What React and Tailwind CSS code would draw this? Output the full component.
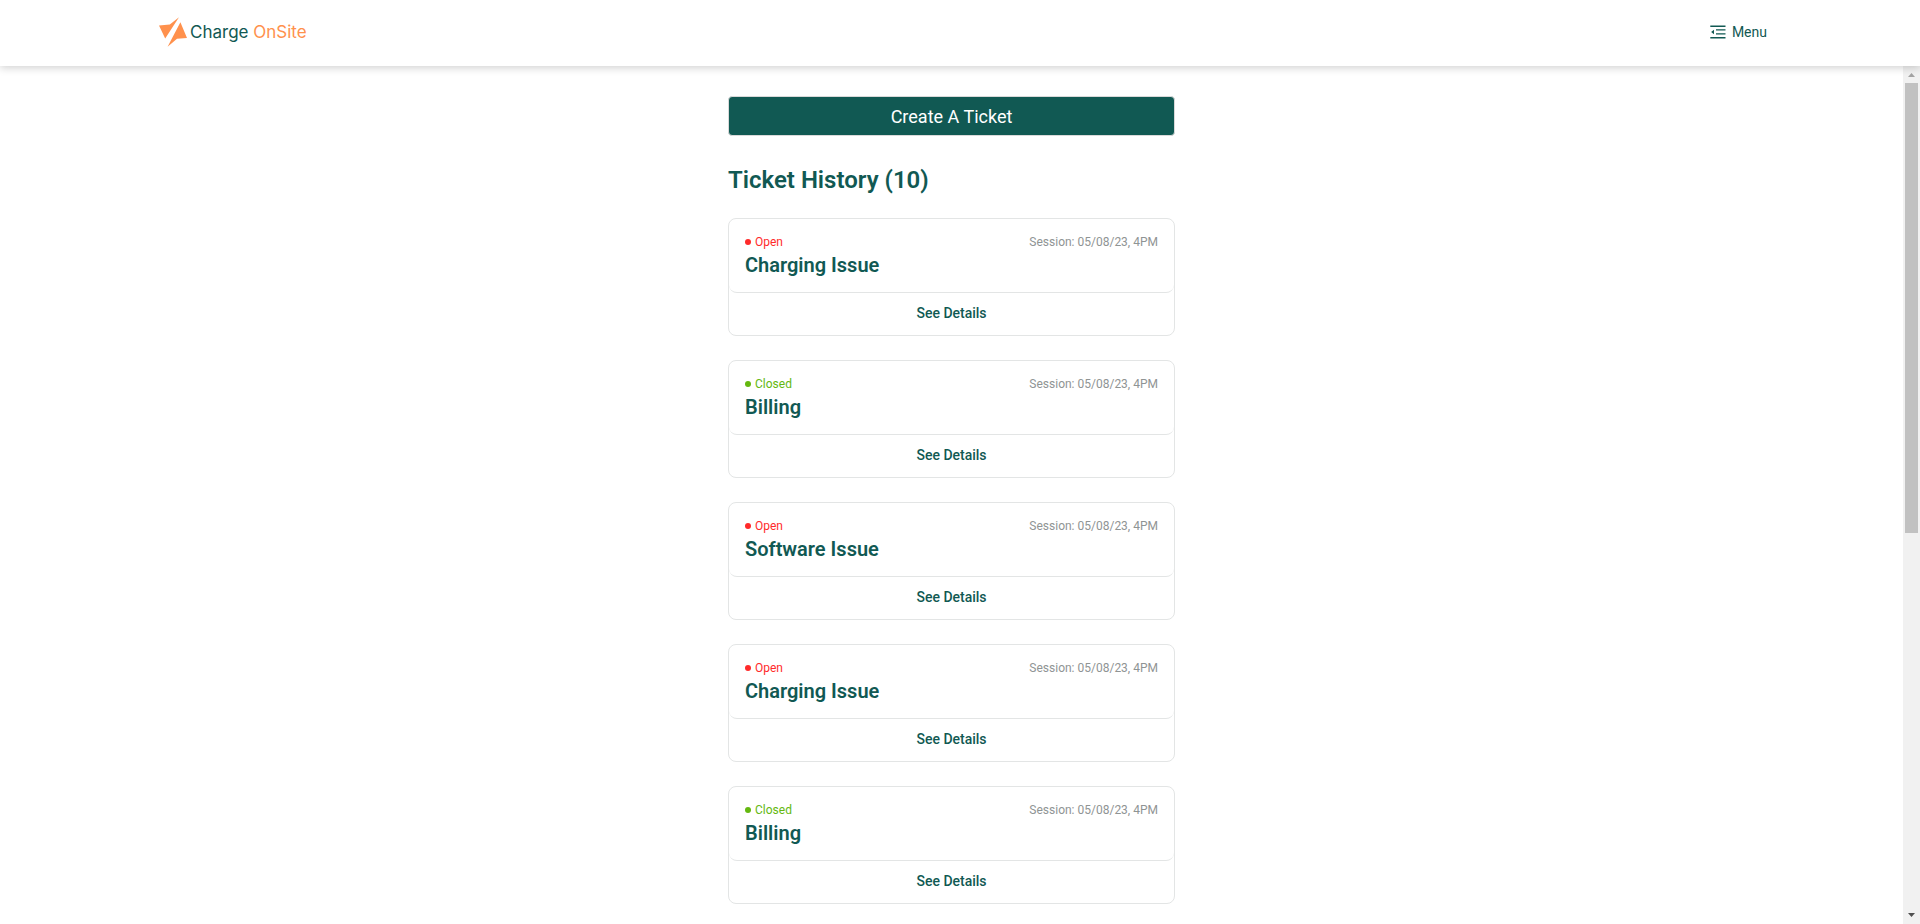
import { useEffect, useRef, useState } from "react";

const kinds = [
  ["Charging Issue", "Open"],
  ["Billing", "Closed"],
  ["Software Issue", "Open"],
];
const order = [0, 1, 2, 0, 1, 2, 0, 1, 2, 0];
const tickets = order.map((k, id) => ({
  id,
  title: kinds[k][0],
  status: kinds[k][1],
  session: "05/08/23, 4PM",
}));

function Logo() {
  return (
    <a href="#" className="flex items-center gap-[3px] font-['Inter',sans-serif] text-[17px] leading-6 text-[#115953]">
      <svg viewBox="0 0 28 30" className="h-[30px] w-7 shrink-0" fill="#ff914d" aria-hidden="true">
        <path d="M0 8.6 L10.8 7.4 L20 0.2 L6.2 21.4 Z" />
        <path d="M21.4 5.2 L28 20.9 L18 21.7 L8.6 29.8 Z" />
      </svg>
      <span>
        Charge <span className="text-[#ff914d]">OnSite</span>
      </span>
    </a>
  );
}

function MenuIcon() {
  return (
    <svg viewBox="0 0 16 14" className="h-[14px] w-4" fill="#115953" aria-hidden="true">
      <path d="M0.3 0.5h15.2v1.4H0.3zM6 4.2h9.5v1.3H6zM6 8.2h9.5v1.3H6zM0.3 12.1h15.2v1.4H0.3zM4 4.7v4.6L1.1 7z" />
    </svg>
  );
}

function TicketCard({ ticket }) {
  const open = ticket.status === "Open";
  return (
    <li className="rounded-lg border border-[#e3e5e5]">
      <div className="h-[74px] rounded-lg border-b border-[#e3e5e5] px-4 pt-3">
        <div className="flex items-center justify-between text-xs leading-[22px]">
          <span className={`flex items-center gap-1 ${open ? "text-[#ff2a2a]" : "text-[#64b80f]"}`}>
            <span className="size-1.5 rounded-full bg-current" />
            {ticket.status}
          </span>
          <span className="text-[#8f9494]">Session: {ticket.session}</span>
        </div>
        <h2 className="text-xl leading-6 font-semibold">{ticket.title}</h2>
      </div>
      <button type="button" className="block h-[42px] w-full pb-0.5 text-sm font-medium">
        See Details
      </button>
    </li>
  );
}

export default function App() {
  const ref = useRef(null);
  const [thumb, setThumb] = useState({ top: 0, size: 55 });

  const update = () => {
    const el = ref.current;
    setThumb({
      top: (el.scrollTop / el.scrollHeight) * 100,
      size: (el.clientHeight / el.scrollHeight) * 100,
    });
  };

  useEffect(() => {
    update();
    window.addEventListener("resize", update);
    return () => window.removeEventListener("resize", update);
  }, []);

  return (
    <div className="flex h-screen flex-col bg-white font-['Roboto',sans-serif] text-[#115953]">
      <header className="z-10 flex shrink-0 items-start justify-between bg-white pt-[17px] pr-[153px] pb-[19px] pl-[159px] shadow-[0_2px_8px_rgba(0,0,0,0.18)]">
        <Logo />
        <button type="button" className="flex items-center gap-1.5 text-sm leading-[30px]">
          <MenuIcon />
          Menu
        </button>
      </header>

      <div className="flex min-h-0 flex-1">
        <main ref={ref} onScroll={update} className="min-w-0 flex-1 overflow-y-auto [scrollbar-width:none]">
          <div className="mx-auto max-w-[447px] pt-[30px] pb-6">
            <button type="button" className="block h-10 w-full rounded border border-[#d9d9d9] bg-[#115953] pt-0.5 text-lg text-white">
              Create A Ticket
            </button>
            <h1 className="mt-7 text-2xl leading-8 font-semibold">Ticket History ({tickets.length})</h1>
            <ul className="mt-[22px] flex flex-col gap-6">
              {tickets.map((t) => (
                <TicketCard key={t.id} ticket={t} />
              ))}
            </ul>
          </div>
        </main>

        <div aria-hidden="true" className="flex w-[17px] shrink-0 flex-col bg-[#f1f1f1]">
          <svg viewBox="0 0 17 17" className="size-[17px]" fill="#a3a3a3">
            <path d="M5 11h7L8.5 7z" />
          </svg>
          <div className="min-h-0 flex-1 px-0.5">
            <div style={{ height: `${thumb.top}%` }} />
            <div className="bg-[#c1c1c1]" style={{ height: `${thumb.size}%` }} />
          </div>
          <svg viewBox="0 0 17 17" className="size-[17px]" fill="#505050">
            <path d="M5 6h7L8.5 10z" />
          </svg>
        </div>
      </div>
    </div>
  );
}
